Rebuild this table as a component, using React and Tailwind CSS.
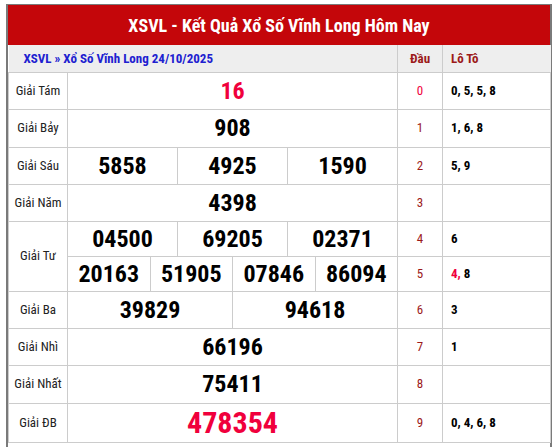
const sub = Array.from({ length: 12 });

const rows = [
  { label: 'Giải Tám', nums: ['16'], red: true, dau: '0', dauRed: true, loto: '0, 5, 5, 8', h: 'h-[37px]' },
  { label: 'Giải Bảy', nums: ['908'], dau: '1', loto: '1, 6, 8', h: 'h-[38px]' },
  { label: 'Giải Sáu', nums: ['5858', '4925', '1590'], dau: '2', loto: '5, 9', h: 'h-[37px]' },
  { label: 'Giải Năm', nums: ['4398'], dau: '3', loto: '', h: 'h-[37px]' },
];

const rowsAfter = [
  { label: 'Giải Ba', nums: ['39829', '94618'], dau: '6', loto: '3', h: 'h-[37px]' },
  { label: 'Giải Nhì', nums: ['66196'], dau: '7', loto: '1', h: 'h-[37px]' },
  { label: 'Giải Nhất', nums: ['75411'], dau: '8', loto: '', h: 'h-[38px]' },
];

function NumCells({ nums, red }) {
  const span = 12 / nums.length;
  return nums.map((n, i) => (
    <td
      key={i}
      colSpan={span}
      className={`border border-[#cccccc] text-center font-bold text-[24px] leading-none ${red ? 'text-[#f0003c]' : 'text-black'}`}
    >
      {n}
    </td>
  ));
}

function DauCells({ dau, dauRed, loto }) {
  return (
    <>
      <td className={`border border-[#cccccc] text-center text-[13px] ${dauRed ? 'text-[#f0003c]' : 'text-[#9c1a1a]'}`}>{dau}</td>
      <td className="border border-[#cccccc] pl-2 text-[13px] font-bold text-black">{loto}</td>
    </>
  );
}

function Row({ r }) {
  return (
    <tr className={r.h}>
      <td className="border border-[#cccccc] text-center text-[13px] text-[#222]">{r.label}</td>
      <NumCells nums={r.nums} red={r.red} />
      <DauCells {...r} />
    </tr>
  );
}

export default function App() {
  return (
    <div className="min-h-screen bg-white pt-[4px] font-['Roboto_Condensed',Roboto,sans-serif] font-stretch-condensed">
      <div className="ml-[6px] w-[546px] min-h-[460px] border-x-2 border-t border-[#7a7a7a]">
        <div className="h-[40px] bg-[#c4060a] flex items-center justify-center text-white font-bold text-[18px]">
          XSVL - Kết Quả Xổ Số Vĩnh Long Hôm Nay
        </div>
        <table className="w-full table-fixed border-collapse">
          <colgroup>
            <col className="w-[59px]" />
            {sub.map((_, i) => (
              <col key={i} className="w-[27.5px]" />
            ))}
            <col className="w-[45px]" />
            <col className="w-[108px]" />
          </colgroup>
          <tbody>
            <tr className="h-[27px] bg-[#eeeeee]">
              <td colSpan={13} className="border-b border-r border-[#cccccc] pl-[15px] text-[13px] font-bold text-[#2020d0]">
                XSVL » Xổ Số Vĩnh Long 24/10/2025
              </td>
              <td className="border-b border-r border-[#cccccc] text-center text-[13px] font-bold text-[#9c1a1a]">Đầu</td>
              <td className="border-b border-[#cccccc] pl-2 text-[13px] font-bold text-[#9c1a1a]">Lô Tô</td>
            </tr>
            {rows.map((r) => (
              <Row key={r.label} r={r} />
            ))}
            <tr className="h-[35px]">
              <td rowSpan={2} className="border border-[#cccccc] text-center text-[13px] text-[#222]">Giải Tư</td>
              <NumCells nums={['04500', '69205', '02371']} />
              <DauCells dau="4" loto="6" />
            </tr>
            <tr className="h-[35px]">
              <NumCells nums={['20163', '51905', '07846', '86094']} />
              <td className="border border-[#cccccc] text-center text-[13px] text-[#9c1a1a]">5</td>
              <td className="border border-[#cccccc] pl-2 text-[13px] font-bold text-black">
                <span className="text-[#f0003c]">4,</span> 8
              </td>
            </tr>
            {rowsAfter.map((r) => (
              <Row key={r.label} r={r} />
            ))}
            <tr className="h-[39px]">
              <td className="border border-[#cccccc] text-center text-[13px] text-[#222]">Giải ĐB</td>
              <td colSpan={12} className="border border-[#cccccc] text-center font-bold text-[30px] leading-none text-[#f0003c]">
                478354
              </td>
              <DauCells dau="9" loto="0, 4, 6, 8" />
            </tr>
          </tbody>
        </table>
      </div>
    </div>
  );
}
